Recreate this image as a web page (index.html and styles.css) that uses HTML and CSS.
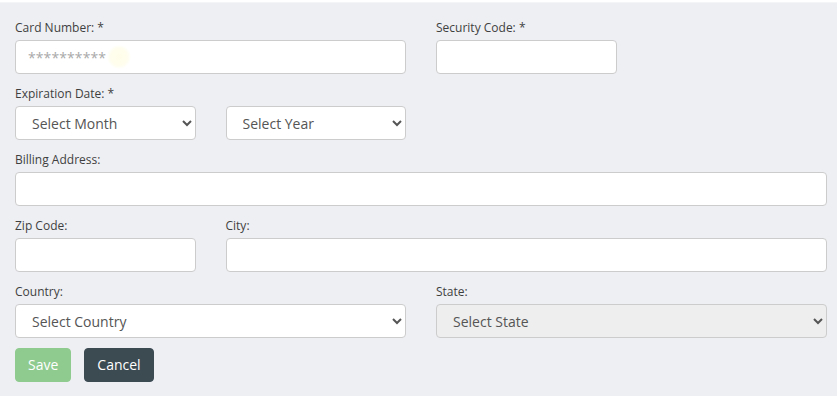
FILE: index.html
```html
<!DOCTYPE html>
<html lang="en">
<head>
<meta charset="utf-8">
<title>Payment Details</title>
<link rel="stylesheet" href="styles.css">
</head>
<body>
<div class="topbar"></div>
<form class="form">
  <div class="grid">
    <div class="group span-6">
      <label class="label">Card Number: *</label>
      <div class="field">
        <input class="control" type="text" placeholder="**********">
        <span class="autofill-hint"></span>
      </div>
    </div>
    <div class="group span-3">
      <label class="label">Security Code: *</label>
      <input class="control" type="text">
    </div>
  </div>
  <div class="grid">
    <div class="group span-6">
      <label class="label">Expiration Date: *</label>
      <div class="pair">
        <select class="control select"><option>Select Month</option></select>
        <select class="control select"><option>Select Year</option></select>
      </div>
    </div>
  </div>
  <div class="grid">
    <div class="group span-12">
      <label class="label">Billing Address:</label>
      <input class="control" type="text">
    </div>
  </div>
  <div class="grid">
    <div class="group span-3">
      <label class="label">Zip Code:</label>
      <input class="control" type="text">
    </div>
    <div class="group span-9">
      <label class="label">City:</label>
      <input class="control" type="text">
    </div>
  </div>
  <div class="grid">
    <div class="group span-6">
      <label class="label">Country:</label>
      <select class="control select"><option>Select Country</option></select>
    </div>
    <div class="group span-6">
      <label class="label">State:</label>
      <select class="control select" disabled><option>Select State</option></select>
    </div>
  </div>
  <div class="actions">
    <button type="button" class="btn btn-save" disabled>Save</button>
    <button type="button" class="btn btn-cancel">Cancel</button>
  </div>
</form>
</body>
</html>
```
FILE: styles.css
```css
html, body {
  margin: 0;
  padding: 0;
}
body {
  background: #eeeff3;
  font-family: "Open Sans", "Noto Sans", sans-serif;
  color: #555;
  width: 837px;
  height: 396px;
  overflow: hidden;
}
.topbar {
  height: 2px;
  background: #ffffff;
  border-bottom: 1px solid #f4f5f7;
}
.form {
  padding: 17px 10px 0 15px;
}
.grid {
  display: grid;
  grid-template-columns: repeat(12, 1fr);
  column-gap: 30px;
}
.span-3 { grid-column: span 3; }
.span-6 { grid-column: span 6; }
.span-9 { grid-column: span 9; }
.span-12 { grid-column: span 12; }
.group {
  display: flex;
  flex-direction: column;
  margin-bottom: 12px;
}
.label {
  display: block;
  font-size: 12px;
  line-height: 16px;
  font-weight: 500;
  color: #3f3f3f;
  margin-bottom: 4px;
}
.field {
  position: relative;
}
.autofill-hint {
  position: absolute;
  left: 92px;
  top: 5px;
  width: 24px;
  height: 24px;
  border-radius: 50%;
  background: radial-gradient(circle, rgba(255, 253, 228, 0.8) 0%, rgba(255, 252, 220, 0.5) 50%, rgba(255, 255, 255, 0) 72%);
  pointer-events: none;
}
.pair {
  display: grid;
  grid-template-columns: 1fr 1fr;
  column-gap: 30px;
}
.control {
  box-sizing: border-box;
  width: 100%;
  height: 34px;
  margin: 0;
  padding: 6px 12px;
  border: 1px solid #cccccc;
  border-radius: 4px;
  background: #ffffff;
  font-family: "Open Sans", "Noto Sans", sans-serif;
  font-size: 14px;
  color: #555;
  outline: none;
}
.control::placeholder {
  color: #a9a9a9;
  letter-spacing: 0.1px;
}
.select {
  padding-left: 12px;
}
.select:disabled {
  background: #eeeeee;
  color: #555;
  opacity: 1;
}
.actions {
  display: flex;
  gap: 13px;
  margin-top: -2px;
}
.btn {
  box-sizing: border-box;
  height: 34px;
  padding: 6px 12px;
  border: 1px solid transparent;
  border-radius: 4px;
  font-family: "Open Sans", "Noto Sans", sans-serif;
  font-size: 14px;
  line-height: 20px;
  color: #ffffff;
}
.btn-save {
  background: #8fcb8f;
  border-color: #8fcb8f;
}
.btn-cancel {
  background: #3c4a52;
  border-color: #3c4a52;
}
```
